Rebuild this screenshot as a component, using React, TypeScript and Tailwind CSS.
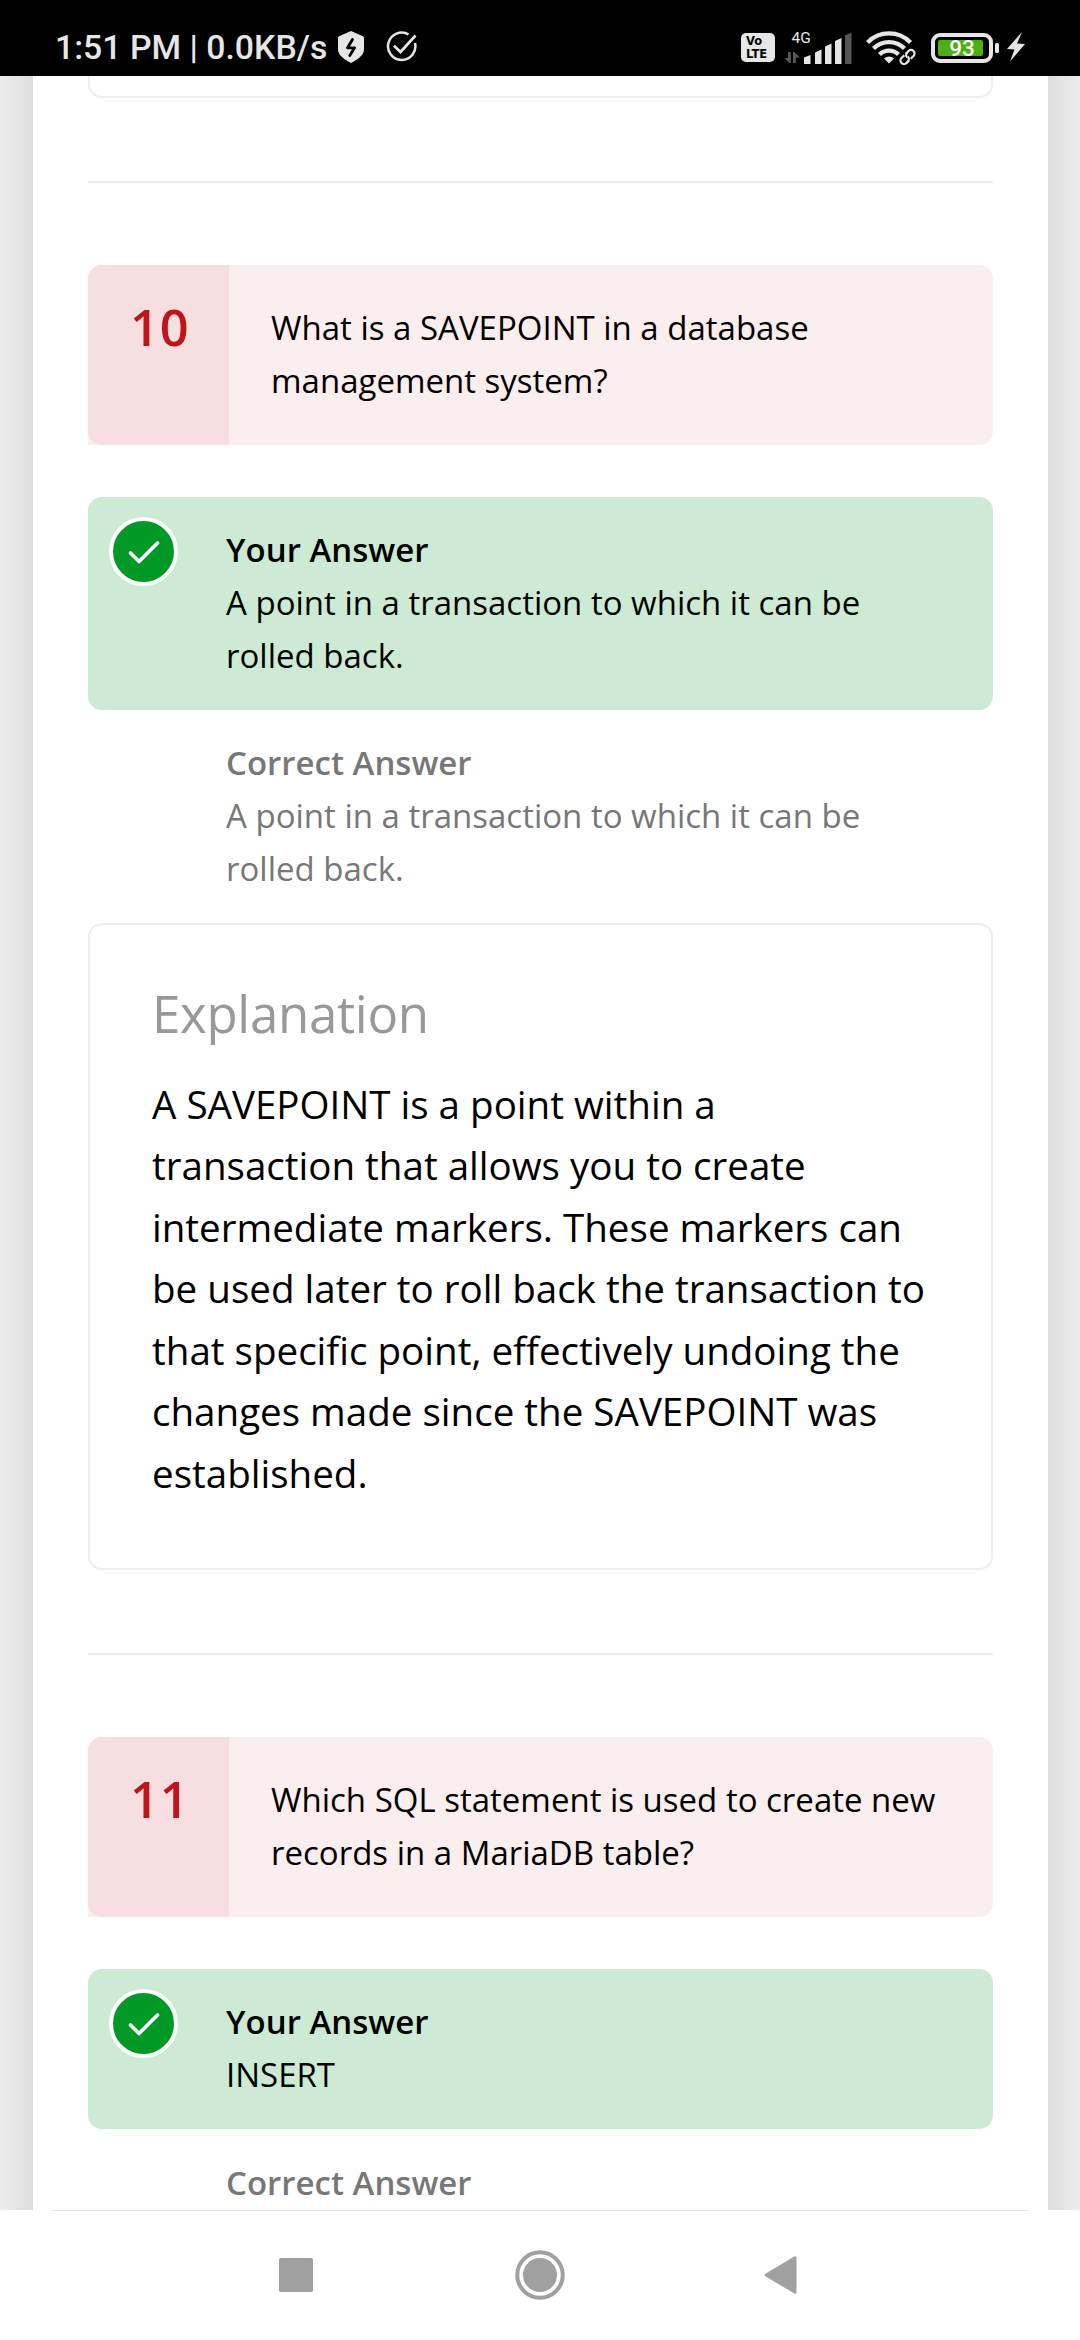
import React from 'react';

const openSans = "font-['Open_Sans','Noto_Sans',sans-serif]";

function ShieldIcon() {
  return (
    <svg className="ml-[11px] h-[34px] w-[28px] shrink-0" viewBox="0 0 28 34">
      <path d="M14 1 26 6.2Q27 6.7 27 8V19C27 26 20 29.5 14 33 8 29.5 1 26 1 19V8Q1 6.700 2 6.200Z" fill="#e6e6e6" />
      <path d="M15.500 9.500 10.500 17.800H17.500L12.800 25.500" fill="none" stroke="#000" strokeWidth="2.800" strokeLinejoin="round" strokeLinecap="round" />
    </svg>
  );
}

function TaskCheckIcon() {
  return (
    <svg className="ml-[21px] h-[32px] w-[32px] shrink-0" viewBox="0 0 32 32">
      <path d="M22.500 3.400A13.700 13.700 0 1 0 29 12" fill="none" stroke="#e6e6e6" strokeWidth="2.500" />
      <path d="M8 14.800 14.500 21 29.500 4.500" fill="none" stroke="#e6e6e6" strokeWidth="2.700" />
    </svg>
  );
}

function VolteIcon() {
  return (
    <div className="ml-auto mt-[1px] flex h-[29px] w-[34px] flex-col items-center justify-center rounded-[5px] bg-[#e6e6e6] font-['DejaVu_Sans',sans-serif] text-[11.5px] font-bold leading-[12.500px] text-black">
      <span className="w-[24px] text-left">Vo</span>
      <span className="w-[24px] text-left">LTE</span>
    </div>
  );
}

function SignalIcon() {
  return (
    <svg className="ml-[9px] h-[36px] w-[68px]" viewBox="0 0 68 36">
      <text x="7.500" y="14" fill="#e6e6e6" fontFamily="Roboto, sans-serif" fontSize="15.500">4G</text>
      <path d="M4 23H6.800V34H5.500L0.500 29H4ZM9 34V23H10.300L15.800 28.500H11.800V34Z" fill="#5a5a5a" />
      <path d="M20 28.500 26.500 26V35H20ZM31 23.500 37.500 20.500V35H31ZM41 17.500 47.500 14.500V35H41ZM51 12 57.500 9V35H51Z" fill="#e6e6e6" />
      <path d="M61 6.500 67.500 3.500V35H61Z" fill="#565656" />
    </svg>
  );
}

function WifiLinkIcon() {
  return (
    <svg className="ml-[14px] h-[36px] w-[50px]" viewBox="0 0 50 36">
      <g fill="none" stroke="#e6e6e6" strokeWidth="4.300">
        <path d="M1.500 13.500A30 30 0 0 1 44.500 13.500" />
        <path d="M7.500 19.500A22 22 0 0 1 38.500 19.500" />
        <path d="M13.500 25.500A13.500 13.500 0 0 1 32.500 25.500" />
      </g>
      <path d="M18 29.500Q23 25.500 28 29.500L23 34.500Z" fill="#e6e6e6" />
      <g transform="rotate(-45 41.500 28)">
        <path d="M33 28h17" stroke="#000" strokeWidth="11" strokeLinecap="round" />
        <g fill="none" stroke="#e6e6e6" strokeWidth="2.200">
          <path d="M40.500 31.500H36.500A3.500 3.500 0 0 1 36.500 24.500H40.500" />
          <path d="M36.500 31.500H38.500A3.500 3.500 0 0 0 42 28" />
          <path d="M42.500 24.500H46.500A3.500 3.500 0 0 1 46.500 31.500H42.500" />
          <path d="M44.500 24.500A3.500 3.500 0 0 0 41 28" />
        </g>
      </g>
    </svg>
  );
}

function BatteryIcon() {
  return (
    <div className="ml-[15px] mt-[1px] flex items-center">
      <div className="flex h-[30px] w-[62px] items-center rounded-[9px] border-4 border-[#e6e6e6] pl-[3px]">
        <div className="flex h-[16px] w-[45px] items-center justify-center rounded-[2px] bg-[#4caf12] pl-[3px] pt-[2px] font-[Roboto,sans-serif] text-[22.5px] font-medium leading-none text-white">
          93
        </div>
      </div>
      <div className="ml-[2px] h-[10px] w-[4px] rounded-[1.500px] bg-[#e6e6e6]" />
    </div>
  );
}

function StatusBar() {
  return (
    <header className="flex h-[76px] shrink-0 items-center bg-black pl-[55px] pr-[54px] pt-[18px] text-[#e6e6e6]">
      <span className="mt-[2px] w-[271px] shrink-0 whitespace-nowrap font-[Roboto,sans-serif] text-[33.8px] font-medium leading-[40px]">1:51 PM | 0.0KB/s</span>
      <ShieldIcon />
      <TaskCheckIcon />
      <VolteIcon />
      <SignalIcon />
      <WifiLinkIcon />
      <BatteryIcon />
      <svg className="ml-[7px] h-[32px] w-[20px]" viewBox="0 0 20 32">
        <path d="M16 1 1 18 8.500 18.500 4 30.500 19 13 11 12.500Z" fill="#e6e6e6" />
      </svg>
    </header>
  );
}

function Question({ number, lines }: { number: number; lines: string[] }) {
  return (
    <div className="flex h-[180px] rounded-r-[14px] rounded-tl-[14px] bg-[#faeeee]">
      <div className="w-[141px] rounded-l-[14px] bg-[#f6dee1] pl-[42px] pt-[28px] text-[50.5px] font-semibold leading-[68px] tracking-[1px] text-[#c01419]">
        {number}
      </div>
      <div className="pl-[42px] pt-[37px]">
        {lines.map((line) => (
          <p key={line} className="whitespace-nowrap">{line}</p>
        ))}
      </div>
    </div>
  );
}

function CheckBadge() {
  return (
    <div className="ml-[21px] mt-[20px] flex size-[69px] shrink-0 items-center justify-center rounded-full border-4 border-white bg-[#009926]">
      <svg className="h-[24px] w-[32px]" viewBox="0 0 32 24">
        <path d="M2.500 13 11 21.500 29.500 3" fill="none" stroke="#fff" strokeWidth="3.600" strokeLinecap="round" strokeLinejoin="round" />
      </svg>
    </div>
  );
}

function Answer({ title, lines, correct = false }: { title: string; lines: string[]; correct?: boolean }) {
  return (
    <div className={correct ? 'flex rounded-[14px] bg-[#cdebd4]' : 'flex text-[#777]'}>
      {correct ? <CheckBadge /> : <div className="ml-[21px] w-[69px] shrink-0" />}
      <div className="pb-[27.300px] pl-[48px] pt-[27.300px]">
        <p className="whitespace-nowrap font-semibold">{title}</p>
        {lines.map((line) => (
          <p key={line} className="whitespace-nowrap">{line}</p>
        ))}
      </div>
    </div>
  );
}

const explanation = [
  'A SAVEPOINT is a point within a',
  'transaction that allows you to create',
  'intermediate markers. These markers can',
  'be used later to roll back the transaction to',
  'that specific point, effectively undoing the',
  'changes made since the SAVEPOINT was',
  'established.',
];

function NavBar() {
  return (
    <nav className="flex h-[130px] shrink-0 flex-col bg-white">
      <div className="mx-[52px] h-px shrink-0 bg-[#e2e2e2]" />
      <div className="flex flex-1 items-center justify-between pb-[1px] pl-[279px] pr-[282px]">
        <div className="size-[34px] rounded-[2px] bg-[#a0a0a0]" />
        <svg className="ml-[3px] size-[50px]" viewBox="0 0 50 50">
          <circle cx="25" cy="25" r="22.700" fill="none" stroke="#a0a0a0" strokeWidth="4" />
          <circle cx="25" cy="25" r="17" fill="#a0a0a0" />
        </svg>
        <svg className="h-[38px] w-[34px]" viewBox="0 0 34 38">
          <path d="M2.200 19 31 1.800V36.200Z" fill="#a0a0a0" stroke="#a0a0a0" strokeWidth="3" strokeLinejoin="round" />
        </svg>
      </div>
    </nav>
  );
}

export default function App() {
  return (
    <div className={`flex h-[2340px] w-[1080px] flex-col overflow-hidden bg-white text-black ${openSans}`}>
      <StatusBar />
      <div className="flex h-[2134px] shrink-0 overflow-hidden">
        <div className="w-[33px] shrink-0 bg-gradient-to-r from-[#ededed] to-[#dedede]" />
        <main className="w-[1015px] shrink-0 bg-white px-[55px] text-[33px] leading-[52.8px]">
          <div className="h-[22px] rounded-b-[14px] border-2 border-t-0 border-[#eee]" />
          <div className="mt-[83px] h-[2px] bg-[#eee]" />
          <div className="mt-[82px]">
            <Question number={10} lines={['What is a SAVEPOINT in a database', 'management system?']} />
          </div>
          <div className="mt-[52px] h-[213px]">
            <Answer correct title="Your Answer" lines={['A point in a transaction to which it can be', 'rolled back.']} />
          </div>
          <div className="h-[213px]">
            <Answer title="Correct Answer" lines={['A point in a transaction to which it can be', 'rolled back.']} />
          </div>
          <section className="h-[647px] rounded-[14px] border-2 border-[#eee] pl-[62px] pt-[52px]">
            <h2 className="text-[51px] leading-[72px] tracking-[-0.3px] text-[#999]">Explanation</h2>
            <div className="mt-[24.5px] text-[38.55px] leading-[61.6px]">
              {explanation.map((line) => (
                <p key={line} className="whitespace-nowrap">{line}</p>
              ))}
            </div>
          </section>
          <div className="mt-[83px] h-[2px] bg-[#eee]" />
          <div className="mt-[82px]">
            <Question number={11} lines={['Which SQL statement is used to create new', 'records in a MariaDB table?']} />
          </div>
          <div className="mt-[52px] h-[161px]">
            <Answer correct title="Your Answer" lines={['INSERT']} />
          </div>
          <Answer title="Correct Answer" lines={[]} />
        </main>
        <div className="w-[32px] shrink-0 bg-gradient-to-r from-[#dedede] to-[#ededed]" />
      </div>
      <NavBar />
    </div>
  );
}
